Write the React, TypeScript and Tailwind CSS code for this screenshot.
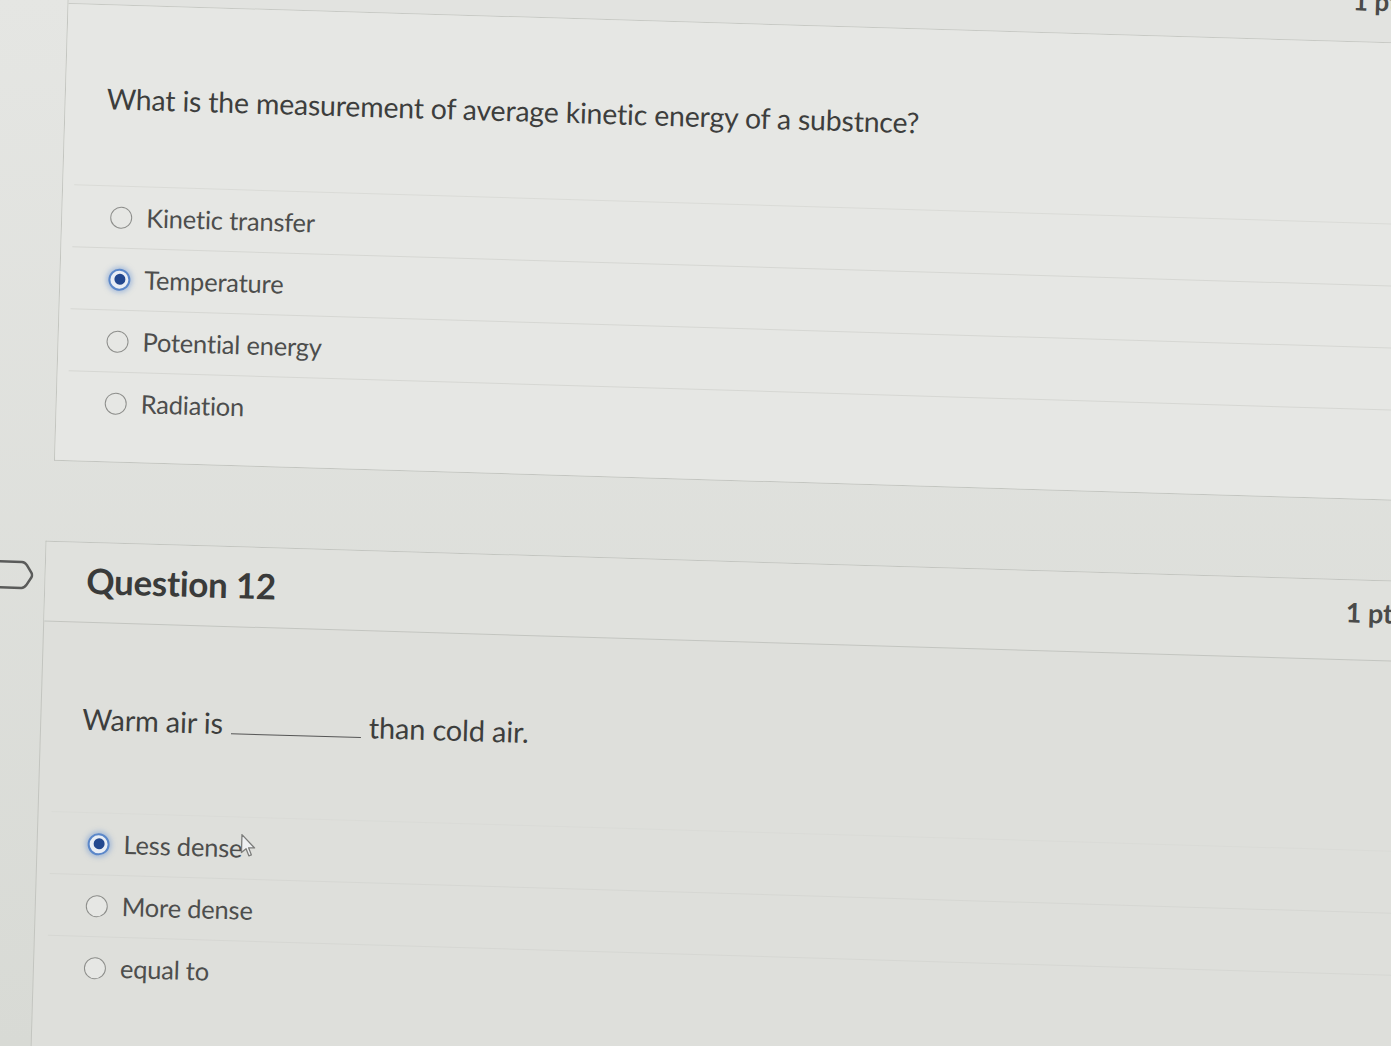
import React from 'react';

interface Option {
    label: string;
    selected?: boolean;
    cursor?: boolean;
}

const q11Options: Option[] = [
    { label: 'Kinetic transfer' },
    { label: 'Temperature', selected: true },
    { label: 'Potential energy' },
    { label: 'Radiation' },
];

const q12Options: Option[] = [
    { label: 'Less dense', selected: true, cursor: true },
    { label: 'More dense' },
    { label: 'equal to' },
];

function Radio({ selected }: { selected?: boolean }) {
    if (selected) {
        return (
            <span className="w-[22px] h-[22px] shrink-0 rounded-full border-2 border-[#5b87c9] bg-[#e9eef5] flex items-center justify-center shadow-[0_0_5px_2px_rgba(110,150,210,0.5)]">
                <span className="w-[11px] h-[11px] rounded-full bg-[#23488f]" />
            </span>
        );
    }
    return <span className="w-[22px] h-[22px] shrink-0 rounded-full border-[1.5px] border-[#8d8e8b] bg-[#e6e7e4]" />;
}

function Cursor() {
    return (
        <svg width="18" height="26" viewBox="0 0 18 26" className="-ml-[4px] -mt-[6px]">
            <path d="M3 2 L3 20 L7.5 16 L10.5 23 L13 22 L10 15 L16 15 Z" fill="#eef0f2" stroke="#7c7d7b" strokeWidth="1.3" strokeLinejoin="round" />
        </svg>
    );
}

function OptionRow({ option, first }: { option: Option; first?: boolean }) {
    return (
        <div className={`h-[62px] flex items-center gap-[14px] pl-[37px] border-t ${first ? 'border-[#dadbd7]' : 'border-[#d6d7d3]'}`}>
            <Radio selected={option.selected} />
            <span className="text-[25.5px] text-[#4d4e4d] tracking-[-0.2px] flex items-center">
                {option.label}
                {option.cursor && <Cursor />}
            </span>
        </div>
    );
}

export default function App() {
    return (
        <div className="w-[1391px] h-[1046px] overflow-hidden bg-gradient-to-b from-[#e5e6e3] to-[#d8dad5] font-['Lato','Open_Sans',sans-serif]">
            <div className="w-[1520px] origin-top-left rotate-[1.7deg]">
                {/* Question 11 */}
                <div className="ml-[70px] -mt-[80px] border-l border-b border-[#c3c5c0]">
                    <div className="h-[82px] flex items-center justify-end pr-[108px] border-b border-[#c7c9c4] bg-[#e2e3e0]">
                        <span className="text-[26px] font-bold text-[#4a4b4a]">1 pts</span>
                    </div>
                    <div className="pt-[76px] pb-[28px] pl-[41px] bg-[#e6e7e4]">
                        <p className="text-[28.5px] leading-[34px] text-[#3d3e3d] tracking-[-0.2px]">
                            What is the measurement of average kinetic energy of a substnce?
                        </p>
                        <div className="mt-[70px] -ml-[30px]">
                            {q11Options.map((o, i) => (
                                <OptionRow key={o.label} option={o} first={i === 0} />
                            ))}
                        </div>
                    </div>
                </div>

                {/* Question 12 */}
                <div className="relative mt-[80px] ml-[64px] border-l border-t border-[#c3c5c0] h-[700px] bg-[#dedfdb]">
                    <svg width="36" height="32" viewBox="0 0 36 32" className="absolute -left-[48px] top-[18px]">
                        <path d="M1 3 H24 Q27 3 29 6 L34 14 Q35 16 34 18 L29 26 Q27 29 24 29 H1" fill="none" stroke="#5a5b5a" strokeWidth="2.5" strokeLinejoin="round" />
                    </svg>
                    <div className="h-[80px] flex items-center justify-between pl-[41px] pr-[95px] border-b border-[#c3c5c0] bg-[#e0e1dd]">
                        <h2 className="text-[35px] font-bold text-[#3a3b3a] -mt-[4px] tracking-[-0.3px]">Question 12</h2>
                        <span className="text-[27px] font-bold text-[#4a4b4a] -mt-[15px]">1 pts</span>
                    </div>
                    <div className="pt-[79px] pl-[41px]">
                        <p className="text-[29px] leading-[34px] text-[#3d3e3d] tracking-[-0.2px] flex items-end">
                            <span>Warm air is</span>
                            <span className="inline-block w-[130px] mx-[8px] mb-[6px] border-b-[1.5px] border-[#555]" />
                            <span>than cold air.</span>
                        </p>
                        <div className="mt-[76px] -ml-[28px]">
                            {q12Options.map((o, i) => (
                                <OptionRow key={o.label} option={o} first={i === 0} />
                            ))}
                        </div>
                    </div>
                </div>
            </div>
        </div>
    );
}
